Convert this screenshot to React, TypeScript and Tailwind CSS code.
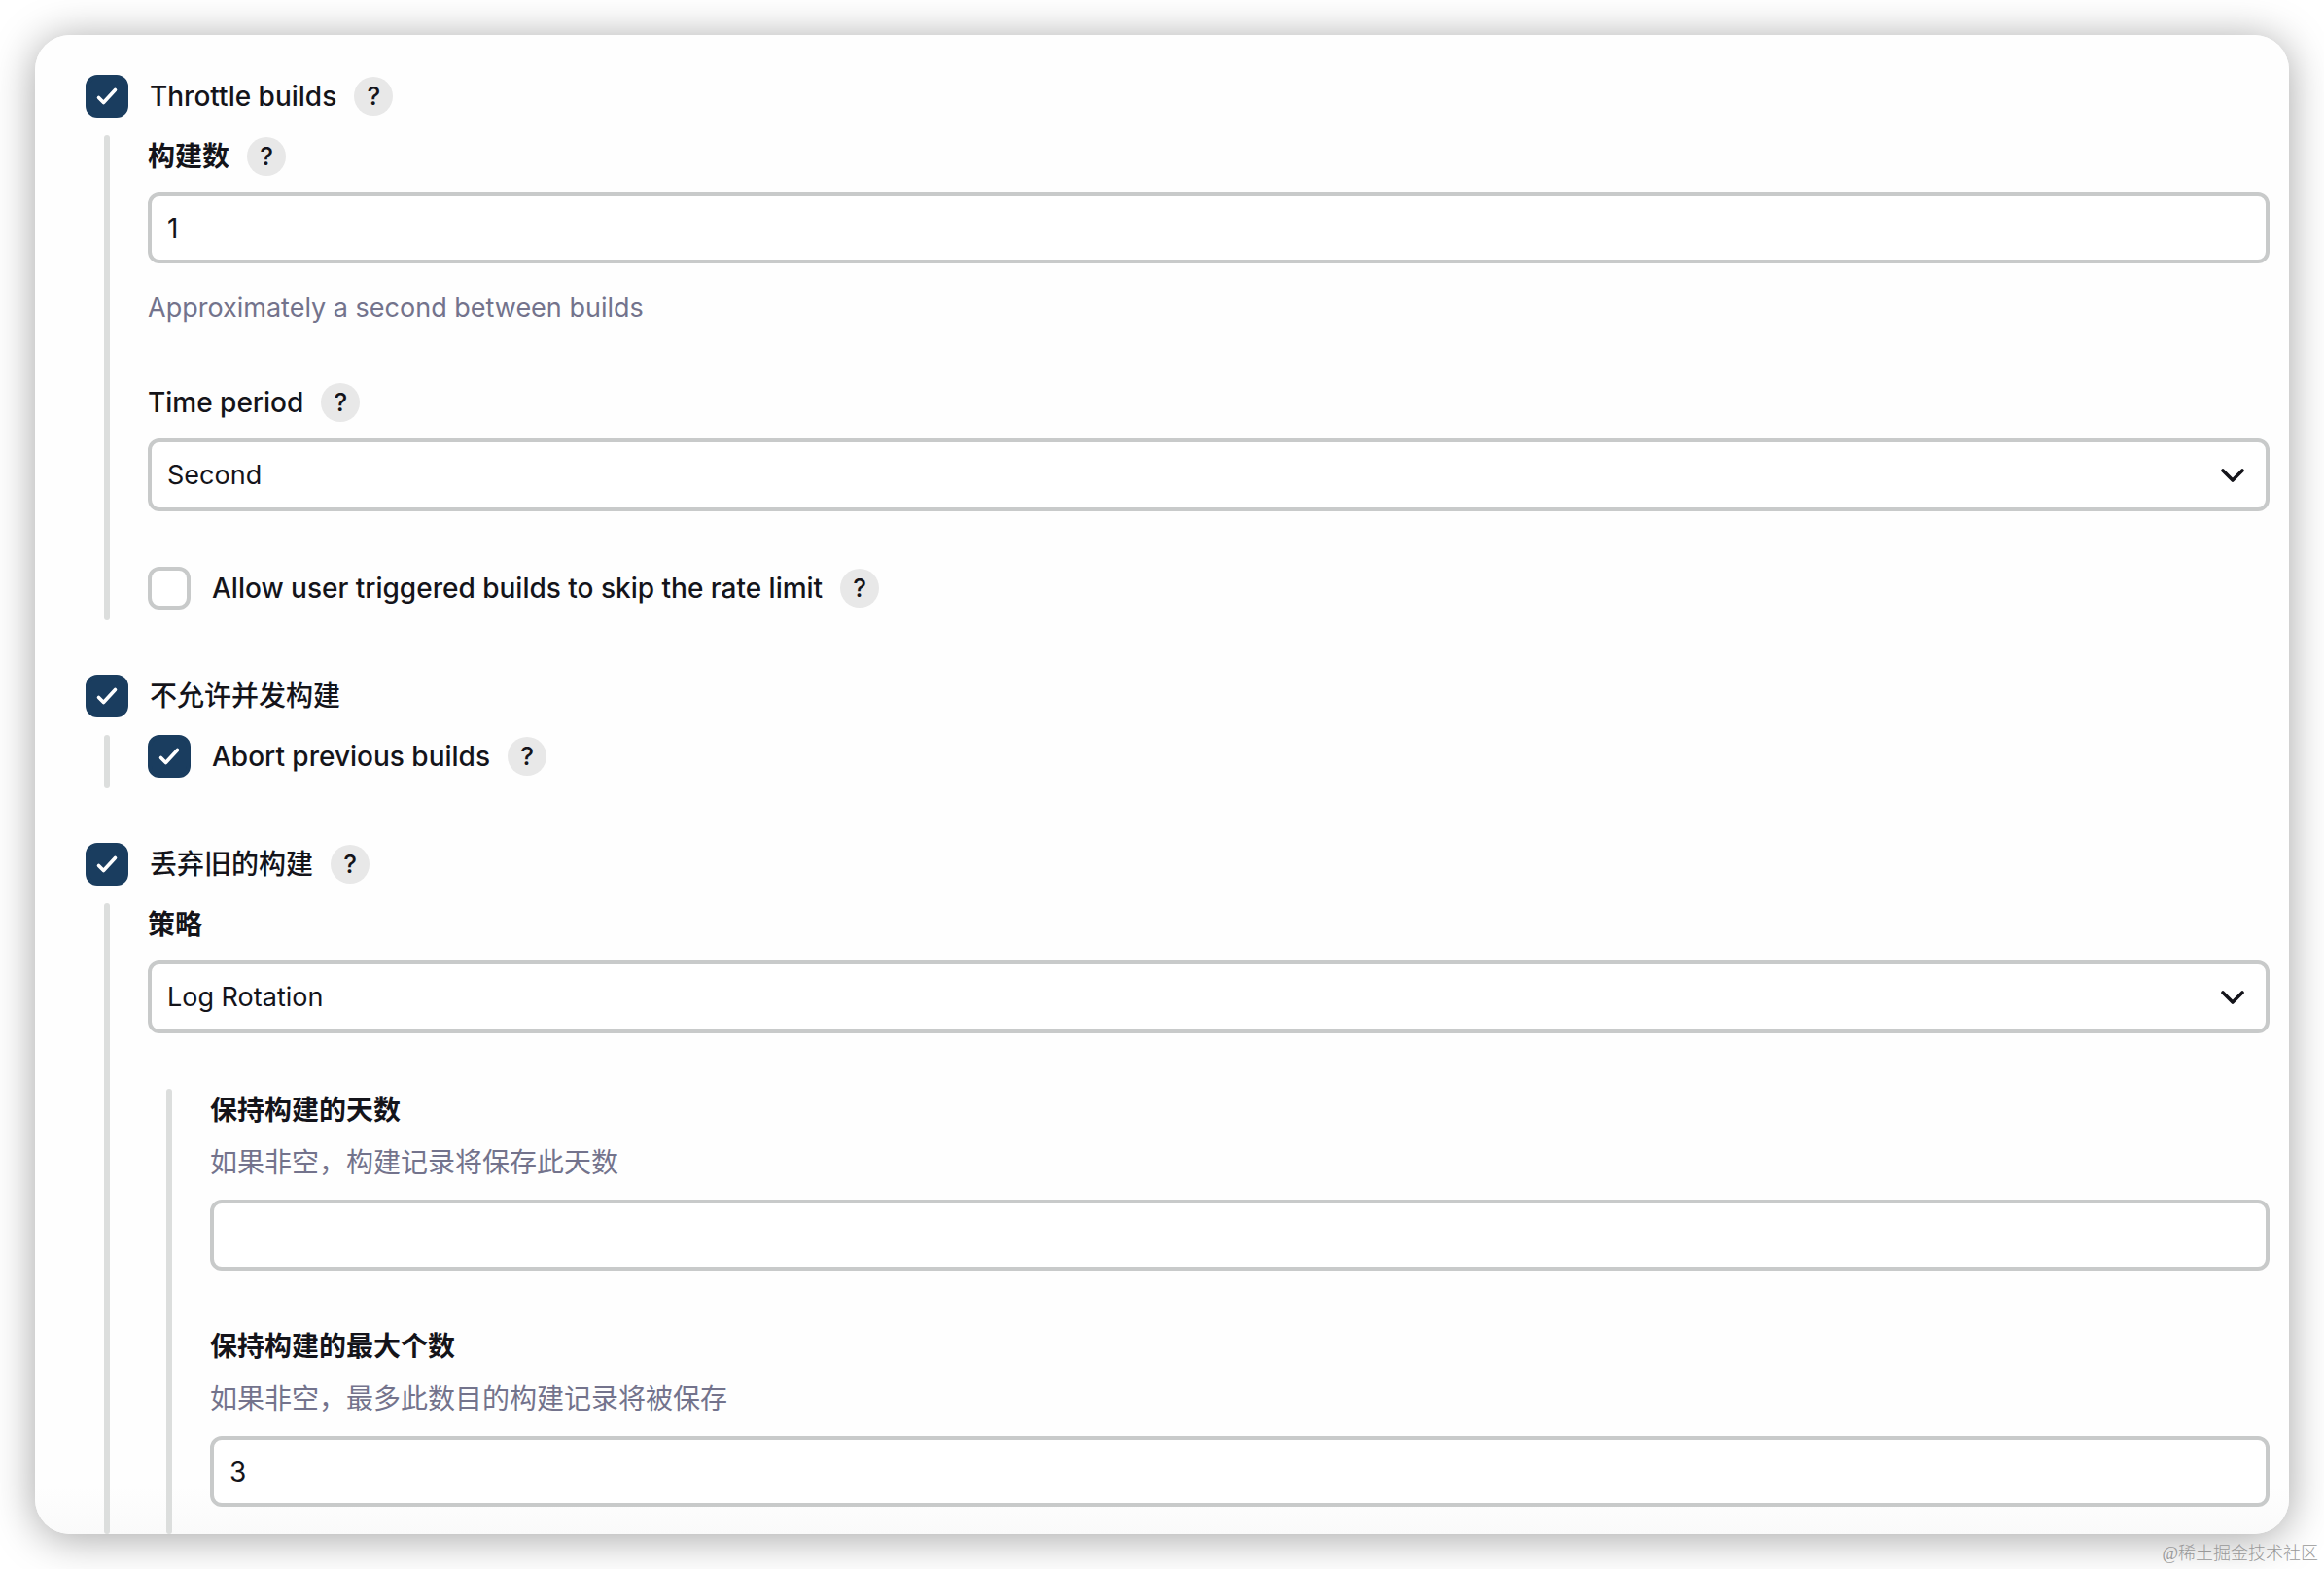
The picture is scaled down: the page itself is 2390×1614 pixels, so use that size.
import { useState, type ReactNode } from "react";

function HelpButton({ topic }: { topic: string }) {
  return (
    <button
      type="button"
      aria-label={`Help for feature: ${topic}`}
      className="ml-[18px] flex size-10 shrink-0 items-center justify-center rounded-full bg-[#e8e8e8] text-[26px] leading-10 font-medium text-[#14141a]"
    >
      ?
    </button>
  );
}

type CheckRowProps = { id: string; label: string; initial?: boolean; help?: boolean };

function CheckRow({ id, label, initial = false, help = false }: CheckRowProps) {
  const [checked, setChecked] = useState(initial);
  return (
    <div className="flex h-11 items-center">
      <span className="relative size-11 shrink-0">
        <input
          id={id}
          type="checkbox"
          checked={checked}
          onChange={(e) => setChecked(e.target.checked)}
          className="block size-11 appearance-none rounded-xl border-4 border-[#c8caca] bg-white checked:border-[#1a3d5f] checked:bg-[#1a3d5f]"
        />
        {checked && (
          <svg
            viewBox="0 0 44 44"
            fill="none"
            stroke="white"
            strokeWidth="3.6"
            strokeLinecap="round"
            strokeLinejoin="round"
            className="pointer-events-none absolute inset-0 size-11"
          >
            <path d="M13.5 23.5L18.5 28.5L30.5 15.5" />
          </svg>
        )}
      </span>
      <label htmlFor={id} className="pl-[22px] font-medium">
        {label}
      </label>
      {help && <HelpButton topic={label} />}
    </div>
  );
}

type FieldLabelProps = { id: string; label: string; help?: boolean; weight?: string };

function FieldLabel({ id, label, help = false, weight = "font-semibold" }: FieldLabelProps) {
  return (
    <div className="flex h-11 items-center">
      <label htmlFor={id} className={weight}>
        {label}
      </label>
      {help && <HelpButton topic={label} />}
    </div>
  );
}

function TextField({ id, value }: { id: string; value: string }) {
  return (
    <input
      id={id}
      type="text"
      defaultValue={value}
      className="block h-[73px] w-full rounded-xl border-4 border-[#c8caca] bg-white px-4"
    />
  );
}

function SelectField({ id, options }: { id: string; options: string[] }) {
  return (
    <div className="relative">
      <select
        id={id}
        className="block h-[75px] w-full appearance-none rounded-xl border-4 border-[#c8caca] bg-white px-4 text-[27px]"
      >
        {options.map((o) => (
          <option key={o}>{o}</option>
        ))}
      </select>
      <svg
        viewBox="0 0 28 28"
        fill="none"
        stroke="#14141a"
        strokeWidth="3.6"
        strokeLinecap="round"
        strokeLinejoin="round"
        className="pointer-events-none absolute inset-y-0 right-6 my-auto size-7"
      >
        <path d="M4 9L14 19L24 9" />
      </svg>
    </div>
  );
}

function Nested({ children }: { children: ReactNode }) {
  return (
    <div className="flex gap-5">
      <div className="flex w-11 shrink-0 justify-center">
        <div className="w-1.5 rounded-full bg-[#dcdedd]" />
      </div>
      <div className="min-w-0 flex-1">{children}</div>
    </div>
  );
}

export default function App() {
  return (
    <div
      lang="zh-CN"
      className="relative min-h-screen bg-white p-9 font-['Inter','Noto_Sans_CJK_SC',sans-serif] text-[28px] leading-9 text-[#14141a]"
    >
      <main className="flex flex-col gap-14 overflow-hidden rounded-[36px] bg-[linear-gradient(to_top,#fafafa,#fefefe_48px)] pt-[41px] pr-5 pl-[52px] shadow-[0_4px_44px_rgba(0,0,0,0.36)]">
        <section className="flex flex-col gap-[18px]">
          <CheckRow id="throttle" label="Throttle builds" initial help />
          <Nested>
            <div className="flex flex-col gap-[57px] pb-[11px]">
              <div>
                <FieldLabel id="count" label="构建数" help />
                <div className="mt-[15px]">
                  <TextField id="count" value="1" />
                </div>
                <p className="mt-7 text-[27px] text-[#73738c]">
                  Approximately a second between builds
                </p>
              </div>
              <div>
                <FieldLabel id="period" label="Time period" weight="font-medium" help />
                <div className="mt-[15px]">
                  <SelectField id="period" options={["Second", "Minute", "Hour", "Day"]} />
                </div>
              </div>
              <CheckRow id="skip" label="Allow user triggered builds to skip the rate limit" help />
            </div>
          </Nested>
        </section>

        <section className="flex flex-col gap-[18px]">
          <CheckRow id="concurrent" label="不允许并发构建" initial />
          <Nested>
            <div className="pb-[11px]">
              <CheckRow id="abort" label="Abort previous builds" initial help />
            </div>
          </Nested>
        </section>

        <section className="flex flex-col gap-[18px]">
          <CheckRow id="discard" label="丢弃旧的构建" initial help />
          <Nested>
            <FieldLabel id="strategy" label="策略" />
            <div className="mt-[15px] mb-[57px]">
              <SelectField id="strategy" options={["Log Rotation"]} />
            </div>
            <Nested>
              <div className="flex flex-col gap-14 pb-7">
                <div>
                  <FieldLabel id="days" label="保持构建的天数" />
                  <p className="mt-3.5 mb-5 text-[#73738c]">如果非空，构建记录将保存此天数</p>
                  <TextField id="days" value="" />
                </div>
                <div>
                  <FieldLabel id="max" label="保持构建的最大个数" />
                  <p className="mt-3.5 mb-5 text-[#73738c]">如果非空，最多此数目的构建记录将被保存</p>
                  <TextField id="max" value="3" />
                </div>
              </div>
            </Nested>
          </Nested>
        </section>
      </main>
      <span className="absolute right-1.5 bottom-1 font-['Liberation_Serif','Noto_Sans_CJK_SC',serif] text-lg leading-6 font-light text-[#999999]">
        @稀土掘金技术社区
      </span>
    </div>
  );
}
